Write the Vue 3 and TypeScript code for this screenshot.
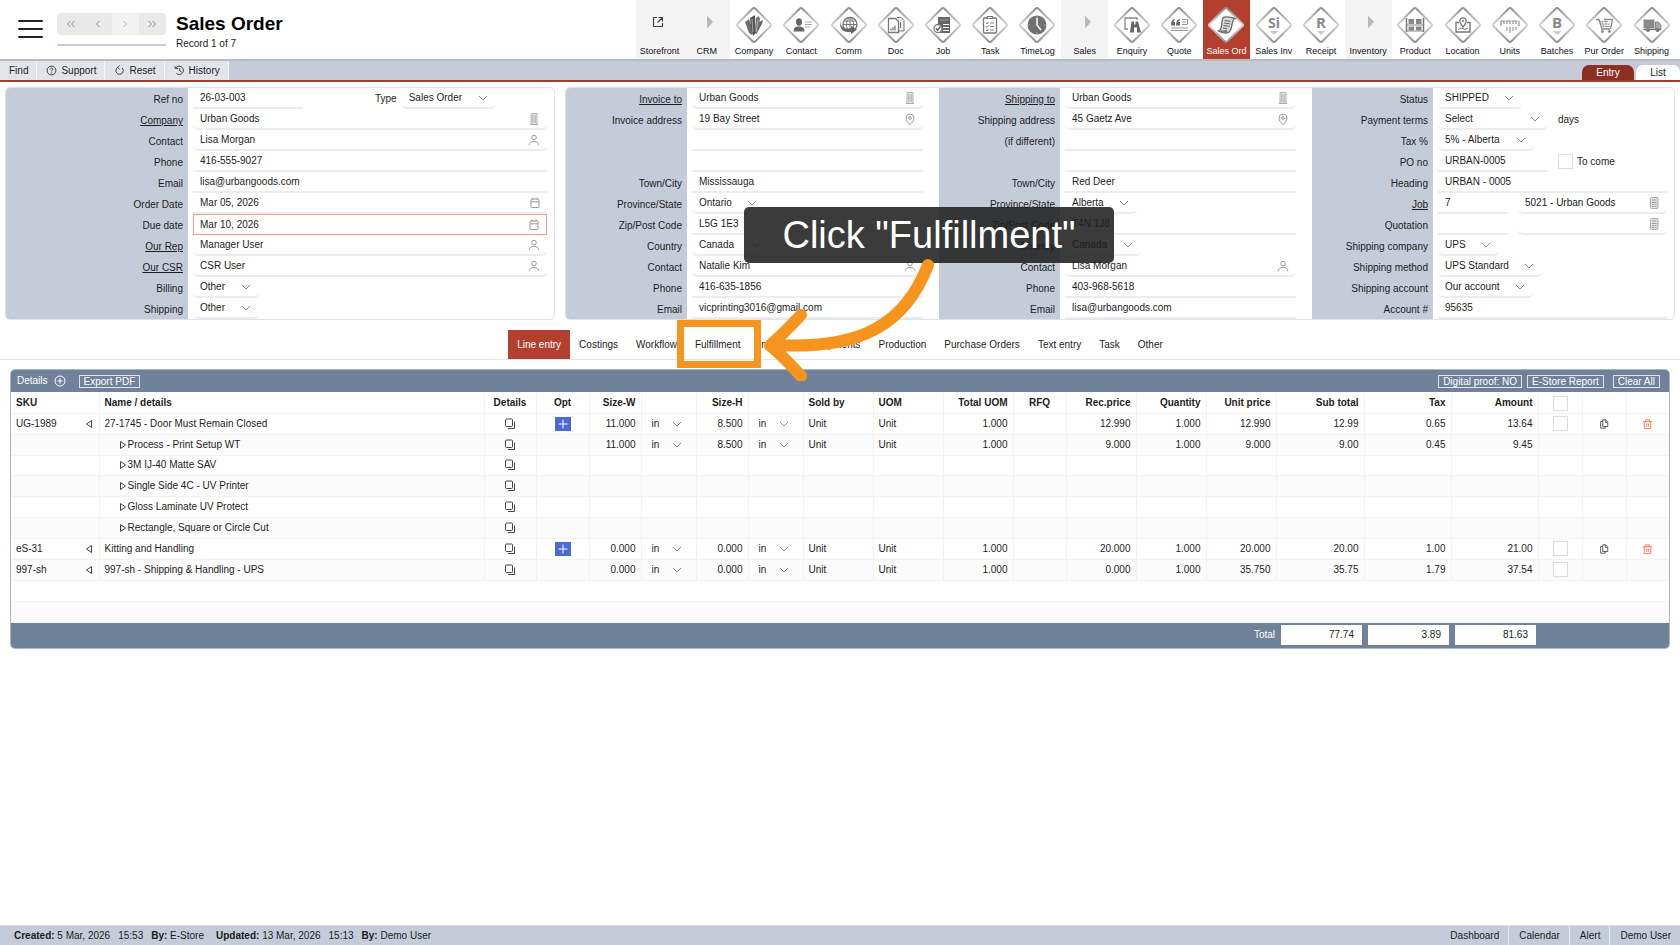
<script setup lang="ts">
import { ref } from 'vue'

type Control = {
  kind: 'text' | 'lookup' | 'date' | 'select' | 'check' | 'note' | 'label'
  value?: string
  icon?: string
  size?: 'xs' | 'sm' | 'grow'
  alert?: boolean
}
type Row = { label: string; link?: boolean; controls: Control[] }
type Section = { id: string; rows: Row[] }

const glyphs: Record<string, string> = {
  building:
    '<path d="M4 1.500h6v11H4z" fill="#e4e4e4" stroke="#b5b5b5"/><path d="M5 4h1.500M7.500 4H9M5 6h1.500M7.500 6H9M5 8h1.500M7.500 8H9M5 10h1.500M7.500 10H9" stroke="#999"/><path d="M3 12.500h8" stroke="#aaa"/>',
  person:
    '<circle cx="7" cy="4.600" r="2.300" fill="none" stroke="#999"/><path d="M2.200 11.800c.4-2.400 2-3.400 4.800-3.400s4.400 1 4.800 3.400" fill="none" stroke="#999" stroke-linecap="round"/>',
  pin: '<path d="M7 12.600C4.400 10.400 3 8.300 3 6.100a4 4 0 0 1 8 0c0 2.200-1.400 4.300-4 6.500z" fill="none" stroke="#999"/><circle cx="7" cy="6" r="1.300" fill="none" stroke="#999"/>',
  calendar:
    '<rect x="4" y="3" width="8" height="8.500" rx="1" fill="none" stroke="#999"/><path d="M4 5.800h8M6 1.600v2M10 1.600v2" stroke="#999"/>',
  sheet:
    '<rect x="3.500" y="1.500" width="7.500" height="11" rx="1" fill="#e4e4e4" stroke="#aaa"/><path d="M5 4h4.500M5 6.500h4.500M5 8.500h2M7.800 8.500h1.700M5 10.500h2M7.800 10.500h1.700" stroke="#999"/>',
}

const section = (id: string, rows: Row[]): Section => ({ id, rows })
const lookup = (value: string, icon: string): Control => ({ kind: 'lookup', value, icon, size: 'grow' })
const text = (value: string, size: Control['size'] = 'grow'): Control => ({ kind: 'text', value, size })
const select = (value: string, size?: Control['size']): Control => ({ kind: 'select', value, size })

const order = section('order', [
  { label: 'Ref no', controls: [text('26-03-003', 'sm'), { kind: 'label', value: 'Type' }, select('Sales Order')] },
  { label: 'Company', link: true, controls: [lookup('Urban Goods', 'building')] },
  { label: 'Contact', controls: [lookup('Lisa Morgan', 'person')] },
  { label: 'Phone', controls: [text('416-555-9027')] },
  { label: 'Email', controls: [text('lisa@urbangoods.com')] },
  { label: 'Order Date', controls: [{ kind: 'date', value: 'Mar 05, 2026', icon: 'calendar', size: 'grow' }] },
  { label: 'Due date', controls: [{ kind: 'date', value: 'Mar 10, 2026', icon: 'calendar', size: 'grow', alert: true }] },
  { label: 'Our Rep', link: true, controls: [lookup('Manager User', 'person')] },
  { label: 'Our CSR', link: true, controls: [lookup('CSR User', 'person')] },
  { label: 'Billing', controls: [select('Other')] },
  { label: 'Shipping', controls: [select('Other')] },
])

const invoice = section('invoice', [
  { label: 'Invoice to', link: true, controls: [lookup('Urban Goods', 'building')] },
  { label: 'Invoice address', controls: [lookup('19 Bay Street', 'pin')] },
  { label: '', controls: [text('')] },
  { label: '', controls: [text('')] },
  { label: 'Town/City', controls: [text('Mississauga')] },
  { label: 'Province/State', controls: [select('Ontario')] },
  { label: 'Zip/Post Code', controls: [text('L5G 1E3')] },
  { label: 'Country', controls: [select('Canada')] },
  { label: 'Contact', controls: [lookup('Natalie Kim', 'person')] },
  { label: 'Phone', controls: [text('416-635-1856')] },
  { label: 'Email', controls: [text('vicprinting3016@gmail.com')] },
])

const shipping = section('shipping', [
  { label: 'Shipping to', link: true, controls: [lookup('Urban Goods', 'building')] },
  { label: 'Shipping address', controls: [lookup('45 Gaetz Ave', 'pin')] },
  { label: '(if different)', controls: [text('')] },
  { label: '', controls: [text('')] },
  { label: 'Town/City', controls: [text('Red Deer')] },
  { label: 'Province/State', controls: [select('Alberta')] },
  { label: 'Zip/Post Code', controls: [text('T4N 1J8')] },
  { label: 'Country', controls: [select('Canada')] },
  { label: 'Contact', controls: [lookup('Lisa Morgan', 'person')] },
  { label: 'Phone', controls: [text('403-968-5618')] },
  { label: 'Email', controls: [text('lisa@urbangoods.com')] },
])

const status = section('status', [
  { label: 'Status', controls: [select('SHIPPED')] },
  { label: 'Payment terms', controls: [select('Select', 'sm'), { kind: 'note', value: 'days' }] },
  { label: 'Tax %', controls: [select('5% - Alberta')] },
  { label: 'PO no', controls: [text('URBAN-0005', 'sm'), { kind: 'check', value: 'To come' }] },
  { label: 'Heading', controls: [text('URBAN - 0005')] },
  { label: 'Job', link: true, controls: [text('7', 'xs'), lookup('5021 - Urban Goods', 'sheet')] },
  { label: 'Quotation', controls: [text('', 'xs'), lookup('', 'sheet')] },
  { label: 'Shipping company', controls: [select('UPS')] },
  { label: 'Shipping method', controls: [select('UPS Standard')] },
  { label: 'Shipping account', controls: [select('Our account')] },
  { label: 'Account #', controls: [text('95635')] },
])

const panels = [
  { id: 'main', sections: [order] },
  { id: 'wide', sections: [invoice, shipping, status] },
]

const arrowGlyph = '<path d="M20 10.500v13l6-6.500z" fill="#b9b9b9"/>'
const modules: { name: string; group?: boolean; art: string }[] = [
  { name: 'Storefront', group: true, art: '<path d="M17 12.500h-3.500v9h9V18M18.500 12.500h4v4M22.500 12.500l-5 5" fill="none" stroke="#444" stroke-width="1.200"/>' },
  { name: 'CRM', group: true, art: arrowGlyph },
  { name: 'Company', art: '<path d="M11 17l4-3 4 12-1 4-3-2z" fill="#6e6e6e"/><path d="M16 13l5-3 1 18-3 3-2-8z" fill="#555"/><path d="M22 13l3-2 1 3-3 15h-1z" fill="#777"/><path d="M25 17l4-2-1 4-5 9z" fill="#666"/><path d="M18 14l1 13M24 15l-2 12" stroke="#bbb" stroke-width=".8"/>' },
  { name: 'Contact', art: '<ellipse cx="18" cy="17" rx="3" ry="3.700" fill="#666"/><path d="M12.500 26.500c0-3 1.500-4.500 4-5h3c2.500.5 4 2 4 5z" fill="#666"/><path d="M24 17h7M24 19.500h7M24 22h5" stroke="#aaa" stroke-width="1"/>' },
  { name: 'Comm', art: '<circle cx="21" cy="19.500" r="7" fill="#fff" stroke="#777" stroke-width="1.400"/><path d="M14 19.500h14M15.500 16h11M21 12.500v14M21 12.500c-5 4-5 10 0 14M21 12.500c5 4 5 10 0 14" fill="none" stroke="#777"/><path d="M12 16c-1.500 6 4 9 10 7v-2.500l6 4-6 4.500v-2.500c-7 2-13-3-10-10.500z" fill="#666"/>' },
  { name: 'Doc', art: '<path d="M21 12.500h4l3 3V26h-5" fill="#eee" stroke="#777"/><path d="M12.500 13.500h7l3 3v11h-10z" fill="#fff" stroke="#777" stroke-width="1.300"/><path d="M15 25.500v-2M17 25.500V22M19 25.500v-5" stroke="#777" stroke-width="1.300"/><path d="M24.500 17v6" stroke="#777"/>' },
  { name: 'Job', art: '<path d="M15 12h12v16H15z" fill="#666"/><path d="M17 15h8" stroke="#999"/><path d="M20 19.500h6M20 22.500h6M20 25.500h6" stroke="#fff" stroke-width="1.200"/><circle cx="15" cy="23.500" r="4" fill="#fff" stroke="#777" stroke-width="1.300"/><path d="M13 23.500l1.500 1.700 3-3.700" fill="none" stroke="#555" stroke-width="1.300"/>' },
  { name: 'Task', art: '<rect x="13.500" y="13" width="13" height="15" rx="1" fill="#fff" stroke="#777" stroke-width="1.300"/><path d="M17.500 13.500v-2h5v2z" fill="#fff" stroke="#777" stroke-width="1.200"/><path d="M16 18l1 1 1.500-2M16 21.500l1 1 1.500-2M16 25l1 1 1.500-2" fill="none" stroke="#777"/><path d="M20 18h4M20 21.500h4M20 25h4" stroke="#888" stroke-width="1.200"/>' },
  { name: 'TimeLog', art: '<circle cx="20" cy="20" r="9.500" fill="#707070"/><path d="M20 13v7l4 5" fill="none" stroke="#fff" stroke-width="1.500"/><path d="M20 11.500v1M20 27.500v1M11.500 20h1M27.500 20h1" stroke="#ddd"/>' },
  { name: 'Sales', group: true, art: arrowGlyph },
  { name: 'Enquiry', art: '<path d="M16 24h-3V13h12v2" fill="none" stroke="#888" stroke-width="1.300"/><path d="M19.500 16.500h2.500v3h1.500v-3H26l3 11h-4v-5h-3v5h-4z" fill="#666"/>' },
  { name: 'Quote', art: '<path d="M15.500 14c-3 1-3.500 4-3.300 6.500H16V17h-1.500c0-1 .5-1.500 1.500-2zM20.500 14c-3 1-3.500 4-3.300 6.500H21V17h-1.500c0-1 .5-1.500 1.500-2z" fill="#666"/><path d="M23 14.500h5.500v4.500M23 17h4M23 19.500h5.500M12 23h17M12 25.500h17" fill="none" stroke="#999" stroke-width="1.200"/>' },
  { name: 'Sales Ord', art: '<path d="M17 12.500c2-1 9-.5 12 1-2 1-2.500 3-3 6-.5 3-1 6.500-3.500 8-2.500.8-7 .2-10-1.500 1.500-.5 2.500-2 3-5s.5-6.500 1.500-8.500z" fill="#d9d9d9" stroke="#666" stroke-width="1.300"/><path d="M18.500 15.500l6 .8M18 18l6 .8M17.500 20.500l6 .8M17 23l4 .6" stroke="#666"/><path d="M12.500 26c3 .3 6 0 8-.5-.3 1.300.5 2 2 2" fill="#888" stroke="#666"/>' },
  { name: 'Sales Inv', art: '<text x="20" y="23" text-anchor="middle" font-family="Open Sans, sans-serif" font-weight="700" font-size="14" fill="#8a8a8a">Si</text><path d="M15.500 26h9l-4.500 4z" fill="#ccc"/>' },
  { name: 'Receipt', art: '<text x="20" y="23" text-anchor="middle" font-family="Open Sans, sans-serif" font-weight="700" font-size="15" fill="#8a8a8a">R</text><path d="M15.500 26h9l-4.500 4z" fill="#ccc"/>' },
  { name: 'Inventory', group: true, art: arrowGlyph },
  { name: 'Product', art: '<path d="M11.500 13v14M28.500 13v14" stroke="#777" stroke-width="1.500"/><path d="M11 20h18M11 26h18" stroke="#888" stroke-width="1.200"/><path d="M13.500 14h5.500v5h-5.500zM21 14h5.500v5H21zM13.500 21.500h5.500v4h-5.500zM21 21.500h5.500v4H21z" fill="#888"/>' },
  { name: 'Location', art: '<path d="M16 17.500h-3v9.500h14v-9.500h-3" fill="none" stroke="#777" stroke-width="1.400"/><path d="M15 24.500l3-1.500 4 1.500 3-1.500" fill="none" stroke="#777"/><path d="M20 22c-2-2.500-3.200-4.200-3.200-6a3.200 3.200 0 0 1 6.400 0c0 1.800-1.200 3.500-3.200 6z" fill="#fff" stroke="#777" stroke-width="1.300"/><circle cx="20" cy="16" r="1" fill="#777"/>' },
  { name: 'Units', art: '<path d="M11 21v-5h3v3M17 19v-3h3v3M23 19v-3h3v3M29 21v-5" fill="none" stroke="#888" stroke-width="1.100"/><path d="M14 16h3M20 16h3M26 16h3" stroke="#bbb"/><path d="M17 22v4M20 22v6M23 22v4M26 22v3" stroke="#999" stroke-width="1.200"/>' },
  { name: 'Batches', art: '<text x="20" y="23" text-anchor="middle" font-family="Open Sans, sans-serif" font-weight="700" font-size="15" fill="#8a8a8a">B</text><path d="M15.500 26h9l-4.500 4z" fill="#ccc"/>' },
  { name: 'Pur Order', art: '<path d="M12 14.500h3l3 9.500h8" fill="none" stroke="#888" stroke-width="1.300"/><path d="M16 16.500h8M17 19h9M17.500 21.500h8.500M18 16.500l1.500 5M22 16.500v5" stroke="#aaa"/><path d="M20 14.500h8.500l-2 9.500" fill="none" stroke="#888" stroke-width="1.300"/><circle cx="18.500" cy="26.500" r="1.400" fill="#888"/><circle cx="25.500" cy="26.500" r="1.400" fill="#888"/>' },
  { name: 'Shipping', art: '<path d="M11.500 14.500h11v9h-11z" fill="#8a8a8a"/><path d="M23.500 17h3l2.500 3.500v4h-5.500z" fill="#aaa" stroke="#888"/><path d="M11.500 24.500h17.500" stroke="#777" stroke-width="1.300"/><circle cx="16" cy="25" r="2" fill="#777"/><circle cx="25.500" cy="25" r="2" fill="#777"/>' },
]
const activeModule = ref('Sales Ord')

const tabs = ['Line entry', 'Costings', 'Workflow', 'Fulfillment', 'Invoices', 'Shipments', 'Production', 'Purchase Orders', 'Text entry', 'Task', 'Other']
const activeTab = ref('Line entry')

type Line = {
  sku?: string
  name: string
  child?: boolean
  opt?: boolean
  w?: string
  h?: string
  rec?: string
  unitPrice?: string
  sub?: string
  tax?: string
  amount?: string
  check?: boolean
  actions?: boolean
}
const lines: Line[] = [
  { sku: 'UG-1989', name: '27-1745 - Door Must Remain Closed', opt: true, w: '11.000', h: '8.500', rec: '12.990', unitPrice: '12.990', sub: '12.99', tax: '0.65', amount: '13.64', check: true, actions: true },
  { name: 'Process - Print Setup WT', child: true, w: '11.000', h: '8.500', rec: '9.000', unitPrice: '9.000', sub: '9.00', tax: '0.45', amount: '9.45' },
  { name: '3M IJ-40 Matte SAV', child: true },
  { name: 'Single Side 4C - UV Printer', child: true },
  { name: 'Gloss Laminate UV Protect', child: true },
  { name: 'Rectangle, Square or Circle Cut', child: true },
  { sku: 'eS-31', name: 'Kitting and Handling', opt: true, w: '0.000', h: '0.000', rec: '20.000', unitPrice: '20.000', sub: '20.00', tax: '1.00', amount: '21.00', check: true, actions: true },
  { sku: '997-sh', name: '997-sh - Shipping & Handling - UPS', w: '0.000', h: '0.000', rec: '0.000', unitPrice: '35.750', sub: '35.75', tax: '1.79', amount: '37.54', check: true },
]
const columns = [
  { key: 'c88', title: 'SKU' },
  { key: 'auto', title: 'Name / details' },
  { key: 'c52', title: 'Details', align: 'mid' },
  { key: 'c53', title: 'Opt', align: 'mid' },
  { key: 'c52', title: 'Size-W', align: 'num' },
  { key: 'c55', title: '' },
  { key: 'c52', title: 'Size-H', align: 'num' },
  { key: 'c55', title: '' },
  { key: 'c70', title: 'Sold by' },
  { key: 'c70', title: 'UOM' },
  { key: 'c70', title: 'Total UOM', align: 'num' },
  { key: 'c53', title: 'RFQ', align: 'mid' },
  { key: 'c70', title: 'Rec.price', align: 'num' },
  { key: 'c70', title: 'Quantity', align: 'num' },
  { key: 'c70', title: 'Unit price', align: 'num' },
  { key: 'c88', title: 'Sub total', align: 'num' },
  { key: 'c87', title: 'Tax', align: 'num' },
  { key: 'c87', title: 'Amount', align: 'num' },
]
</script>

<template>
  <div class="page">
    <header class="top">
      <button class="menu" aria-label="Menu"><span></span><span></span><span></span></button>
      <div class="pager">
        <div class="pager-buttons">
          <button aria-label="First record"><svg viewBox="0 0 12 12"><path d="M5.500 3L2.500 6l3 3M9.500 3l-3 3 3 3" /></svg></button>
          <button aria-label="Previous record"><svg viewBox="0 0 12 12"><path d="M7.500 3l-3 3 3 3" /></svg></button>
          <button class="pale" aria-label="Next record"><svg viewBox="0 0 12 12"><path d="M4.500 3l3 3-3 3" /></svg></button>
          <button aria-label="Last record"><svg viewBox="0 0 12 12"><path d="M2.500 3l3 3-3 3M6.500 3l3 3-3 3" /></svg></button>
        </div>
        <div class="pager-line"></div>
      </div>
      <div class="heading">
        <h1>Sales Order</h1>
        <p>Record 1 of 7</p>
      </div>
      <nav class="modules">
        <a v-for="m in modules" :key="m.name" href="#" :class="['module', { group: m.group, active: m.name === activeModule }]" @click.prevent="activeModule = m.name">
          <svg viewBox="0 0 40 40" aria-hidden="true">
            <defs v-if="!m.group">
              <linearGradient :id="'edge-' + m.name.replace(' ', '')" x1="0" y1="0" x2="1" y2="1">
                <stop offset="0" stop-color="#8f8f8f" /><stop offset=".5" stop-color="#d2d2d2" /><stop offset="1" stop-color="#8f8f8f" />
              </linearGradient>
            </defs>
            <rect v-if="!m.group" x="7.500" y="7.500" width="25" height="25" rx="2" transform="rotate(45 20 20)" fill="#fff" :stroke="'url(#edge-' + m.name.replace(' ', '') + ')'" stroke-width="2" />
            <g v-html="m.art"></g>
          </svg>
          <span>{{ m.name }}</span>
        </a>
      </nav>
    </header>

    <div class="toolbar">
      <button>Find</button>
      <button><svg viewBox="0 0 12 12"><circle cx="6" cy="6" r="4.800" /><path d="M4.600 4.900c0-2 2.900-1.900 2.900-.2 0 1-1.500 1.100-1.500 2.300M6 8.200v.9" /></svg>Support</button>
      <button><svg viewBox="0 0 12 12"><path d="M4 2.700a4 4 0 1 0 4.800.5M6 .7L3.800 2.700l2.200 2" /></svg>Reset</button>
      <button><svg viewBox="0 0 12 12"><path d="M1 1.300l.6 2.800 2.900-.3M1.800 3.800a4.500 4.500 0 1 1 1 5.400M6.300 3.500v3l2 1.200" /></svg>History</button>
      <div class="views">
        <button class="view current">Entry</button>
        <button class="view">List</button>
      </div>
    </div>

    <main>
      <div class="panels">
        <section v-for="p in panels" :key="p.id" :class="['panel', p.id]">
          <div v-for="s in p.sections" :key="s.id" :class="['section', s.id]">
            <div v-for="(r, i) in s.rows" :key="i" class="row">
              <label class="caption" :for="`${s.id}-${i}-0`"><a v-if="r.link" href="#">{{ r.label }}</a><template v-else>{{ r.label }}</template></label>
              <div class="controls">
                <template v-for="(c, j) in r.controls" :key="j">
                  <label v-if="c.kind === 'label'" class="inline-label" :for="`${s.id}-${i}-${j + 1}`">{{ c.value }}</label>
                  <span v-else-if="c.kind === 'note'" class="note">{{ c.value }}</span>
                  <label v-else-if="c.kind === 'check'" class="check"><input type="checkbox" />{{ c.value }}</label>
                  <span v-else-if="c.kind === 'select'" :class="['field', 'soft', c.size]">
                    <select :id="`${s.id}-${i}-${j}`"><option>{{ c.value }}</option></select>
                    <svg class="chevron" viewBox="0 0 10 10"><path d="M1 3l4 4 4-4" /></svg>
                  </span>
                  <span v-else :class="['field', c.size, { soft: c.kind === 'lookup', alert: c.alert }]">
                    <input :id="`${s.id}-${i}-${j}`" type="text" :value="c.value" :aria-label="r.label || 'Address line'" />
                    <svg v-if="c.icon" class="glyph" viewBox="0 0 14 14" v-html="glyphs[c.icon]"></svg>
                  </span>
                </template>
              </div>
            </div>
          </div>
        </section>
      </div>

      <nav class="tabs">
        <button v-for="t in tabs" :key="t" :class="{ active: t === activeTab }" @click="activeTab = t">{{ t }}</button>
      </nav>

      <section class="details">
        <div class="details-head">
          <span>Details</span>
          <button class="add" aria-label="Add line"><svg viewBox="0 0 12 12"><circle cx="6" cy="6" r="5" /><path d="M6 3.300v5.400M3.300 6h5.400" /></svg></button>
          <button class="ghost">Export PDF</button>
          <span class="spacer"></span>
          <button class="ghost">Digital proof: NO</button>
          <button class="ghost">E-Store Report</button>
          <button class="ghost last">Clear All</button>
        </div>
        <table>
          <colgroup>
            <col v-for="(c, i) in columns" :key="i" :class="c.key" />
            <col class="c44" /><col class="c44" /><col class="c44" />
          </colgroup>
          <thead>
            <tr>
              <th v-for="(c, i) in columns" :key="i" :class="c.align">{{ c.title }}</th>
              <th class="mid"><input type="checkbox" aria-label="Select all lines" /></th>
              <th></th>
              <th></th>
            </tr>
          </thead>
          <tbody>
            <tr v-for="l in lines" :key="l.name">
              <td>
                <div v-if="l.sku" class="sku">{{ l.sku }}<svg class="tri" viewBox="0 0 8 10"><path d="M6.500 1.500v7L1.500 5z" /></svg></div>
              </td>
              <td>
                <div :class="{ child: l.child }"><svg v-if="l.child" class="tri" viewBox="0 0 8 10"><path d="M1.500 1.500v7l5-3.500z" /></svg>{{ l.name }}</div>
              </td>
              <td class="mid">
                <button class="icon" aria-label="Line details"><svg viewBox="0 0 12 12"><rect x="1.500" y="1" width="7" height="7.500" rx="1" /><path d="M10.500 3.500v7H4" /></svg></button>
              </td>
              <td class="mid">
                <button v-if="l.opt" class="plus" aria-label="Options"><svg viewBox="0 0 16 14"><path d="M8 2.500v9M3.500 7h9" /></svg></button>
              </td>
              <td class="num">{{ l.w }}</td>
              <td>
                <span v-if="l.w" class="unit"><select aria-label="Width unit"><option>in</option></select><svg class="chevron" viewBox="0 0 10 10"><path d="M1 3l4 4 4-4" /></svg></span>
              </td>
              <td class="num">{{ l.h }}</td>
              <td>
                <span v-if="l.h" class="unit"><select aria-label="Height unit"><option>in</option></select><svg class="chevron" viewBox="0 0 10 10"><path d="M1 3l4 4 4-4" /></svg></span>
              </td>
              <td>{{ l.w ? 'Unit' : '' }}</td>
              <td>{{ l.w ? 'Unit' : '' }}</td>
              <td class="num">{{ l.w ? '1.000' : '' }}</td>
              <td></td>
              <td class="num">{{ l.rec }}</td>
              <td class="num">{{ l.w ? '1.000' : '' }}</td>
              <td class="num">{{ l.unitPrice }}</td>
              <td class="num">{{ l.sub }}</td>
              <td class="num">{{ l.tax }}</td>
              <td class="num">{{ l.amount }}</td>
              <td class="mid"><input v-if="l.check" type="checkbox" :aria-label="'Select ' + l.name" /></td>
              <td class="mid">
                <button v-if="l.actions" class="icon small" aria-label="Copy line"><svg viewBox="0 0 12 12"><path d="M4.500 1h3.500l2.500 2.500V9h-6zM7.500 1v3h3M4.500 3H2v8h5.500V9" /></svg></button>
              </td>
              <td class="mid">
                <button v-if="l.actions" class="icon trash" aria-label="Delete line"><svg viewBox="0 0 12 12"><path d="M1 3.500h10M4 3.500V1.500h4v2M2.500 3.500v7.500h7V3.500M5 5.500v3.500M7 5.500v3.500" /></svg></button>
              </td>
            </tr>
            <tr v-for="n in 2" :key="'blank' + n" class="blank"><td colspan="21"></td></tr>
          </tbody>
        </table>
        <div class="totals">
          <span>Total</span>
          <output>77.74</output>
          <output>3.89</output>
          <output>81.63</output>
        </div>
      </section>
    </main>

    <footer>
      <span class="stamp"><b>Created:</b> 5 Mar, 2026</span>
      <span class="stamp">15:53</span>
      <span class="stamp wide"><b>By:</b> E-Store</span>
      <span class="stamp"><b>Updated:</b> 13 Mar, 2026</span>
      <span class="stamp">15:13</span>
      <span class="stamp"><b>By:</b> Demo User</span>
      <nav>
        <a href="#">Dashboard</a>
        <a href="#">Calendar</a>
        <a href="#">Alert</a>
        <a href="#">Demo User</a>
      </nav>
    </footer>

    <div class="guide">
      <div class="guide-tip">Click "Fulfillment"</div>
      <div class="guide-box"></div>
      <svg class="guide-arrow" viewBox="0 0 190 130" aria-hidden="true">
        <path d="M178 14C155 74 110 99 25 94M51 64Q34 82 20 94.500Q36 108 51 125" />
      </svg>
    </div>
  </div>
</template>

<style>
body {
  margin: 0;
  background: #fff;
}
</style>

<style scoped>
* {
  box-sizing: border-box;
}
.page {
  position: relative;
  display: flex;
  flex-direction: column;
  min-height: 100vh;
  font-family: 'Liberation Sans', Arial, sans-serif;
  font-size: 10px;
  line-height: 12px;
  color: #1d1d1d;
}
button,
input,
select {
  font: inherit;
  color: inherit;
  border: 0;
  background: none;
  padding: 0;
  margin: 0;
  outline: 0;
}
button {
  cursor: pointer;
}
a {
  color: inherit;
}
select {
  appearance: none;
}
input[type='checkbox'] {
  appearance: none;
  display: block;
  width: 15px;
  height: 15px;
  border: 1px solid #dcdcdc;
  background: #fff;
}

/* header */
.top {
  display: flex;
  height: 61px;
  border-bottom: 2px solid #b9babe;
}
.menu {
  display: flex;
  flex-direction: column;
  gap: 5px;
  width: 25px;
  margin: 20px 14px 0 18px;
  align-self: flex-start;
}
.menu span {
  height: 2px;
  border-radius: 1px;
  background: #222;
}
.menu span + span {
  margin-top: 1px;
}
.pager {
  width: 109px;
  padding-top: 13px;
}
.pager-buttons {
  display: flex;
  height: 22px;
  border-radius: 4px;
  overflow: hidden;
}
.pager-buttons button {
  flex: 1;
  display: flex;
  align-items: center;
  justify-content: center;
  background: #e9e9e9;
}
.pager-buttons .pale {
  background: #f2f2f2;
}
.pager-buttons svg {
  width: 12px;
  height: 12px;
  fill: none;
  stroke: #8c8c8c;
}
.pager-buttons .pale svg {
  stroke: #b5b5b5;
}
.pager-line {
  margin-top: 9px;
  height: 2px;
  background: #c5ccd7;
}
.heading {
  padding: 13px 0 0 10px;
}
.heading h1 {
  margin: 0;
  font-size: 19px;
  line-height: 22px;
  color: #000;
}
.heading p {
  margin: 3px 0 0;
}
.modules {
  display: flex;
  width: 1044px;
  margin-left: auto;
  padding-right: 5px;
}
.module {
  flex: 1 1 0;
  display: flex;
  flex-direction: column;
  align-items: center;
  padding-top: 5px;
  font-size: 9px;
  line-height: 12px;
  color: #111;
  text-decoration: none;
  white-space: nowrap;
}
.module svg {
  width: 40px;
  height: 40px;
}
.module.group {
  background: #f3f3f3;
}
.module.active {
  background: #b3402f;
  color: #fff;
}

/* toolbar */
.toolbar {
  display: flex;
  height: 21px;
  background: #c5ccd7;
  border-bottom: 2px solid #9c3f32;
}
.toolbar > button {
  display: flex;
  align-items: center;
  gap: 4px;
  padding: 0 8px 0 9px;
  background: #e1e5ea;
  border-right: 1px solid #f3f5f7;
}
.toolbar > button svg {
  width: 11px;
  height: 11px;
  fill: none;
  stroke: #333;
}
.views {
  display: flex;
  gap: 2px;
  margin-left: auto;
  align-items: flex-end;
}
.view {
  height: 15px;
  width: 44px;
  border-radius: 7px 7px 0 0;
  background: #fff;
}
.view.current {
  width: 52px;
  background: #8c3023;
  color: #fff;
}

/* form panels */
main {
  flex: 1;
}
.panels {
  display: grid;
  grid-template-columns: minmax(0, 550fr) minmax(0, 1110fr);
  gap: 10px;
  margin: 5px 5px 0;
}
.panel {
  display: grid;
  border: 1px solid #dde2ea;
  border-radius: 5px;
  overflow: hidden;
}
.panel.wide {
  grid-template-columns: minmax(0, 373fr) minmax(0, 373fr) minmax(0, 362fr);
}
.section {
  padding-right: 16px;
  background: linear-gradient(#c5ccd7, #c5ccd7) 0 0 / 121px 100% no-repeat;
}
.section.order {
  padding-right: 7px;
  background-size: 182px 100%;
}
.section.status {
  padding-right: 7px;
}
.row {
  display: flex;
  height: 21px;
}
.caption {
  flex: none;
  width: 121px;
  padding: 6px 5px 0 0;
  text-align: right;
  white-space: nowrap;
}
.order .caption {
  width: 182px;
}
.controls {
  flex: 1;
  display: flex;
  padding-left: 5px;
  min-width: 0;
}
.field {
  position: relative;
  display: flex;
  border-bottom: 2px solid #ececee;
}
.field.soft {
  border-radius: 0 0 5px 5px;
}
.field.grow {
  flex: 1;
}
.field.sm {
  width: 110px;
}
.field.xs {
  width: 70px;
  margin-right: 10px;
}
.field.alert {
  border: 1px solid #f59a94;
}
.field input {
  width: 100%;
  padding: 1px 0 0 7px;
}
.field.alert input {
  padding-left: 6px;
}
.field select {
  width: 100%;
  padding: 1px 33px 0 7px;
}
.glyph {
  position: absolute;
  right: 6px;
  top: 3px;
  width: 14px;
  height: 14px;
}
.chevron {
  position: absolute;
  right: 8px;
  top: 5px;
  width: 10px;
  height: 10px;
  fill: none;
  stroke: #8a8a8a;
  pointer-events: none;
}
.inline-label {
  padding: 5px 5px 0 0;
  margin-left: 72px;
}
.note,
.check {
  padding: 5px 0 0 10px;
}
.check {
  display: flex;
  gap: 4px;
}
.check input {
  margin-top: -2px;
}

/* section tabs */
.tabs {
  display: flex;
  justify-content: center;
  height: 30px;
  margin-top: 10px;
  border-bottom: 1px solid #e2e4e8;
}
.tabs button {
  padding: 0 9px;
  height: 29px;
  white-space: nowrap;
}
.tabs .active {
  background: #b3402f;
  color: #fff;
}

/* line table */
.details {
  margin: 9px 10px 0;
  border: 1px solid #a9b4c4;
  border-radius: 5px;
  overflow: hidden;
}
.details-head {
  display: flex;
  align-items: center;
  height: 22px;
  padding: 0 9px 0 6px;
  background: #70829a;
  color: #fff;
}
.add {
  margin: 0 13px 0 6px;
  display: flex;
}
.add svg {
  width: 12px;
  height: 12px;
  fill: none;
  stroke: #fff;
}
.ghost {
  height: 13px;
  line-height: 11px;
  padding: 0 4px;
  border: 1px solid #dfe4ea;
}
.spacer {
  flex: 1;
}
.ghost + .ghost {
  margin-left: 5px;
}
.ghost + .last {
  margin-left: 9px;
}
table {
  width: 100%;
  table-layout: fixed;
  border-collapse: collapse;
}
.c44 {
  width: 44px;
}
.c44:last-child {
  width: 43px;
}
.c52 {
  width: 52px;
}
.c53 {
  width: 53px;
}
.c55 {
  width: 55px;
}
.c70 {
  width: 70px;
}
.c87 {
  width: 87px;
}
.c88 {
  width: 88px;
}
tr {
  height: 21px;
}
tbody tr:nth-child(3) {
  height: 20px;
}
tbody tr:nth-child(even) {
  background: #fbfbfc;
}
th,
td {
  padding: 0 5px;
  text-align: left;
  white-space: nowrap;
  border-right: 1px solid #f2f2f3;
  border-bottom: 1px solid #f2f2f3;
}
th {
  padding-top: 2px;
}
th:last-child,
td:last-child {
  border-right: 0;
}
.num {
  text-align: right;
}
.mid {
  text-align: center;
}
.mid input {
  margin: 0 auto;
}
.sku {
  display: flex;
  align-items: center;
  justify-content: space-between;
  padding-right: 1px;
}
.tri {
  width: 8px;
  height: 10px;
  fill: none;
  stroke: #444;
}
.child {
  display: flex;
  align-items: center;
  gap: 1px;
  padding-left: 14px;
}
.icon {
  display: block;
  margin: 0 auto;
  height: 12px;
}
.icon svg {
  display: block;
  width: 12px;
  height: 12px;
  fill: none;
  stroke: #444;
}
.icon.small svg {
  width: 10px;
}
.icon.trash svg {
  width: 11px;
  stroke: #ff6e57;
}
.plus {
  display: block;
  margin: 0 auto;
  width: 16px;
  height: 14px;
  background: #4a6ad4;
}
.plus svg {
  display: block;
  width: 16px;
  height: 14px;
  stroke: #fff;
}
.unit {
  position: relative;
  display: flex;
  height: 18px;
  margin: 0 -5px;
}
.unit select {
  width: 100%;
  padding-left: 10px;
}
.unit .chevron {
  right: 14px;
  top: 4px;
}
.totals {
  display: flex;
  align-items: center;
  gap: 6px;
  height: 25px;
  padding-right: 133px;
  background: #70829a;
  color: #fff;
}
.totals span {
  margin-left: auto;
}
.totals output {
  width: 81px;
  height: 20px;
  padding: 4px 8px 0 0;
  text-align: right;
  background: #fff;
  color: #1d1d1d;
}

/* status bar */
footer {
  display: flex;
  align-items: center;
  height: 20px;
  padding-left: 14px;
  background: #c5ccd7;
  border-top: 1px solid #dde1e7;
}
.stamp {
  margin-right: 8px;
}
.stamp.wide {
  margin-right: 12px;
}
footer nav {
  display: flex;
  align-self: stretch;
  margin-left: auto;
}
footer a {
  padding: 4px 9px 0 10px;
  text-decoration: none;
  border-left: 1px solid #e6e9ee;
}
footer a:first-child {
  border-left: 0;
}

/* walkthrough callout, floating over the page */
.guide {
  position: absolute;
  left: 50%;
  top: 207px;
  pointer-events: none;
}
.guide-tip {
  position: absolute;
  left: -96px;
  top: 0;
  width: 370px;
  height: 56px;
  border-radius: 5px;
  background: rgba(30, 30, 30, 0.87);
  color: #fff;
  font-size: 38px;
  line-height: 56px;
  text-align: center;
  white-space: nowrap;
}
.guide-box {
  position: absolute;
  left: -163px;
  top: 113px;
  width: 84px;
  height: 48px;
  border: 7px solid #f7941d;
}
.guide-arrow {
  position: absolute;
  left: -90px;
  top: 44px;
  width: 190px;
  height: 130px;
  fill: none;
  stroke: #f7941d;
  stroke-width: 12;
  stroke-linecap: round;
  stroke-linejoin: round;
}
</style>
